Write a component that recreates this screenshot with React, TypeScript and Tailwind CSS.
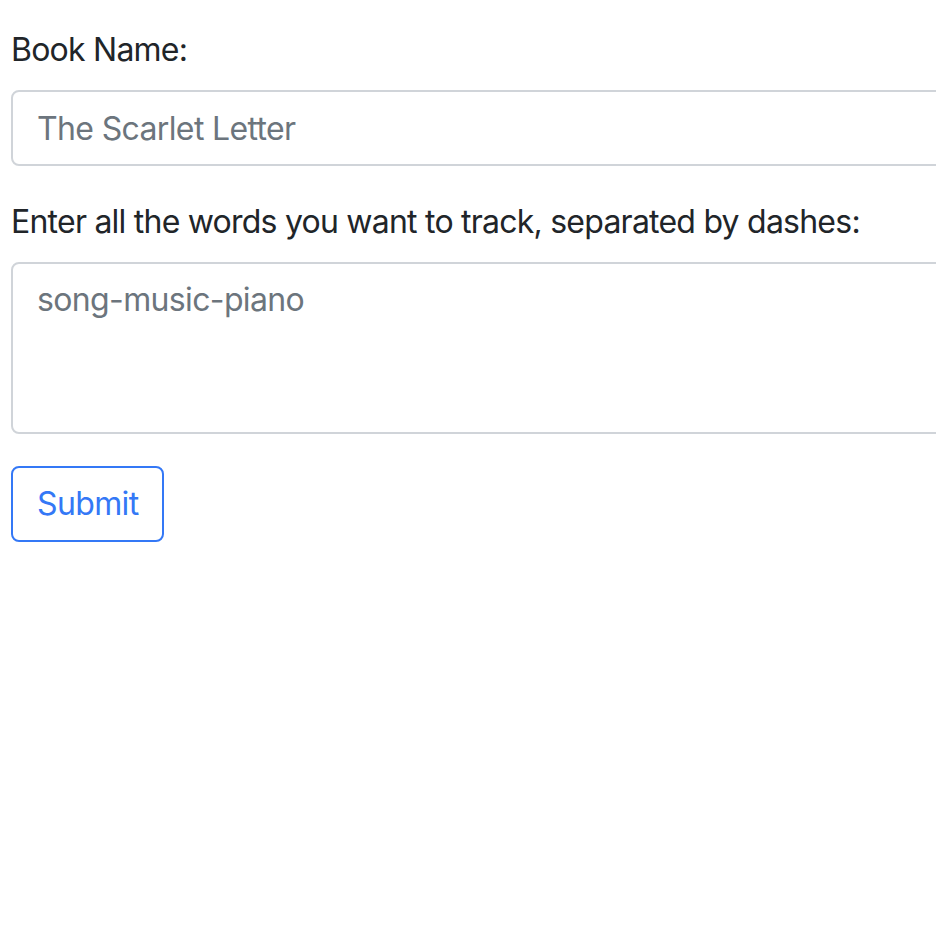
import React from "react";

export default function App() {
  return (
    <div className="w-[936px] h-[927px] overflow-hidden bg-white" style={{ fontFamily: "Inter, 'Liberation Sans', sans-serif" }}>
      <div className="pl-[11px] pt-[26px] w-[1100px]">
        <div className="mb-[32px]">
          <label className="block mb-[16px] text-[32px] leading-[48px] tracking-[-0.024em] text-[#212529]">Book Name:</label>
          <input
            className="block w-full h-[76px] px-[24px] py-[12px] text-[32px] leading-[48px] tracking-[-0.02em] text-[#495057] border-2 border-[#d0d4d9] rounded-[8px] placeholder:text-[#6c757d] outline-none"
            placeholder="The Scarlet Letter"
          />
        </div>
        <div className="mb-[32px]">
          <label className="block mb-[16px] text-[32px] leading-[48px] tracking-[-0.024em] text-[#212529]">Enter all the words you want to track, separated by dashes:</label>
          <textarea
            className="block w-full h-[172px] px-[24px] py-[12px] text-[32px] leading-[48px] tracking-[-0.02em] text-[#495057] border-2 border-[#d0d4d9] rounded-[8px] placeholder:text-[#6c757d] outline-none resize-none"
            placeholder="song-music-piano"
          />
        </div>
        <button className="h-[76px] px-[24px] text-[32px] leading-[48px] tracking-[-0.02em] text-[#3478f6] border-2 border-[#3478f6] rounded-[8px] bg-white">
          Submit
        </button>
      </div>
    </div>
  );
}
